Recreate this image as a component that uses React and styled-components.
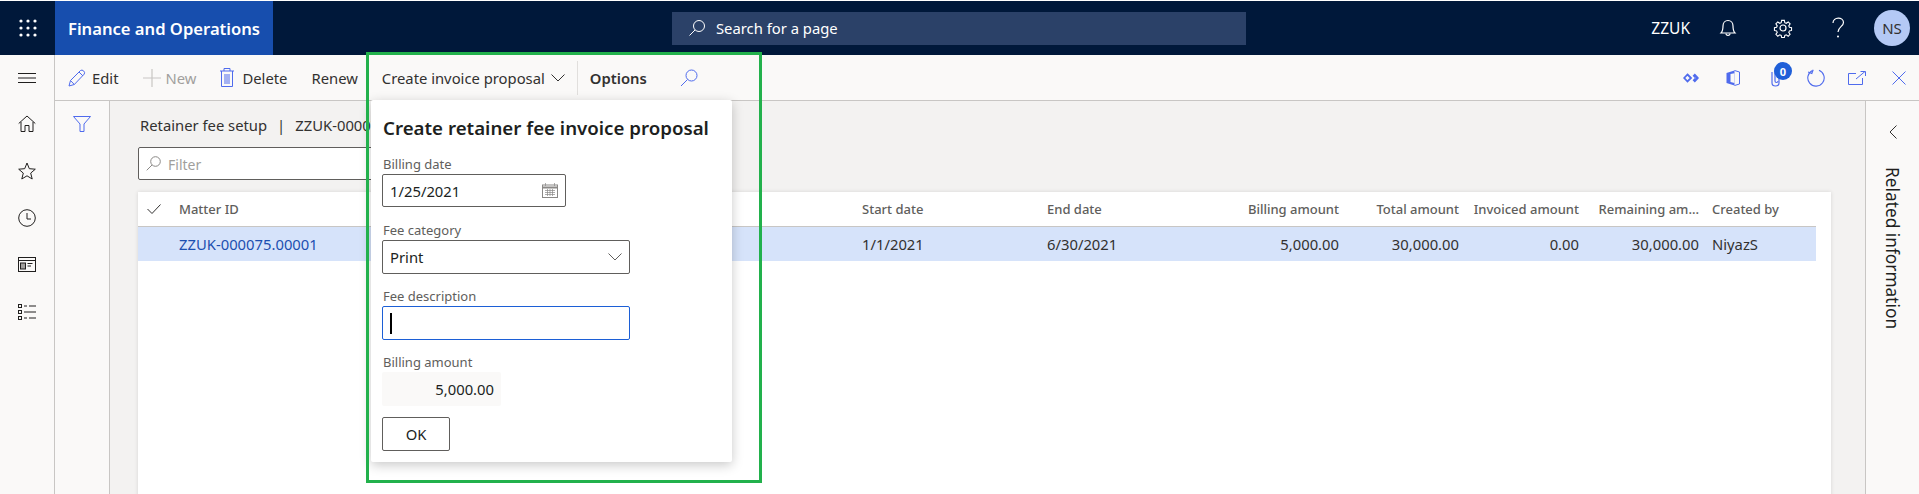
import React from "react";
import styled, { createGlobalStyle } from "styled-components";

const FONT = `"Noto Sans", "Open Sans", "Liberation Sans", sans-serif`;
const BLUE = "#4f6bed";

const GlobalStyle = createGlobalStyle`
  html, body {
    margin: 0;
    padding: 0;
    background: #ffffff;
  }
  * {
    box-sizing: border-box;
  }
`;

const Ico = ({ w = 20, h = 20, box, color = "currentColor", children, sw = 1 }) => (
  <svg
    width={w}
    height={h}
    viewBox={box || `0 0 ${w} ${h}`}
    fill="none"
    stroke={color}
    strokeWidth={sw}
  >
    {children}
  </svg>
);

const COLUMNS = [
  { key: "start", label: "Start date", value: "1/1/2021" },
  { key: "end", label: "End date", value: "6/30/2021" },
  { key: "billing", label: "Billing amount", value: "5,000.00", right: true },
  { key: "total", label: "Total amount", value: "30,000.00", right: true },
  { key: "invoiced", label: "Invoiced amount", value: "0.00", right: true },
  { key: "remaining", label: "Remaining am...", value: "30,000.00", right: true },
  { key: "created", label: "Created by", value: "NiyazS", pad: true },
];

export default function App() {
  return (
    <Page>
      <GlobalStyle />
      <TopBar>
        <Waffle>
          <Ico w={18} h={18}>
            {[2, 9, 16].map((y) =>
              [2, 9, 16].map((x) => (
                <circle key={`${x}-${y}`} cx={x} cy={y} r="1.6" fill="#fff" stroke="none" />
              ))
            )}
          </Ico>
        </Waffle>
        <Brand>Finance and Operations</Brand>
        <SearchBox>
          <Ico w={18} h={18} color="#fff">
            <circle cx="11" cy="7" r="5.5" />
            <path d="M7 11 L1.5 16.5" />
          </Ico>
          Search for a page
        </SearchBox>
        <TopRight>
          <Company>ZZUK</Company>
          <TopIcon>
            <Ico w={18} h={18} color="#fff" sw={1.2}>
              <path d="M2 14 C4 12 4 10 4 7 C4 4 6 1.5 9 1.5 C12 1.5 14 4 14 7 C14 10 14 12 16 14 Z" />
              <path d="M7 14.5 C7 17 11 17 11 14.5" />
            </Ico>
          </TopIcon>
          <TopIcon>
            <Ico w={20} h={20} color="#fff" sw={1.2}>
              <circle cx="10" cy="10" r="3" />
              <path d="M8.5 1.5h3l.5 2.6 1.6.7 2.2-1.5 2.1 2.1-1.5 2.2.7 1.6 2.4.5v3l-2.4.5-.7 1.6 1.5 2.2-2.1 2.1-2.2-1.5-1.6.7-.5 2.4h-3l-.5-2.4-1.6-.7-2.2 1.5-2.1-2.1 1.5-2.2-.7-1.6-2.4-.5v-3l2.4-.5.7-1.6-1.5-2.2 2.1-2.1 2.2 1.5 1.6-.7z" transform="translate(1 1) scale(.9)" />
            </Ico>
          </TopIcon>
          <TopIcon>
            <Ico w={14} h={22} color="#fff" sw={1.2}>
              <path d="M2 6 C2 -0.5 12.5 -0.5 12.5 5.5 C12.5 9.5 7 10 7 15" />
              <circle cx="7" cy="19.5" r="1" fill="#fff" stroke="none" />
            </Ico>
          </TopIcon>
          <Avatar>NS</Avatar>
        </TopRight>
      </TopBar>

      <Main>
        <LeftNav>
          <NavItem $h={45}>
            <Ico w={18} h={10} color="#201f1e">
              <path d="M0 .5h18M0 5h18M0 9.500h18" />
            </Ico>
          </NavItem>
          <NavItem $h={47}>
            <Ico w={18} h={18} color="#201f1e">
              <path d="M.7 8.500 L9 1 L17.300 8.500 M3 7 V16.500 H7 V10.500 H11 V16.500 H15 V7" />
            </Ico>
          </NavItem>
          <NavItem $h={47}>
            <Ico w={18} h={18} color="#201f1e">
              <path d="M9 1 L11.300 6.700 L17.300 7.200 L12.700 11.100 L14.200 17 L9 13.800 L3.800 17 L5.300 11.100 L.7 7.200 L6.700 6.700 Z" />
            </Ico>
          </NavItem>
          <NavItem $h={47}>
            <Ico w={18} h={18} color="#201f1e">
              <circle cx="9" cy="9" r="8.300" />
              <path d="M9 4 V10 H13" />
            </Ico>
          </NavItem>
          <NavItem $h={47}>
            <Ico w={18} h={15} color="#201f1e">
              <rect x=".5" y=".5" width="17" height="14" />
              <path d="M0 3.500h18" />
              <rect x="2.500" y="6" width="5" height="6" fill="#a19f9d" />
              <path d="M9.500 6.500h5M9.500 9h3.500" />
            </Ico>
          </NavItem>
          <NavItem $h={47}>
            <Ico w={18} h={16} color="#201f1e">
              <rect x=".5" y=".5" width="3" height="3" />
              <rect x=".5" y="6.500" width="3" height="3" />
              <rect x=".5" y="12.500" width="3" height="3" />
              <path d="M6 2h3M11 2h7M6 8h12M6 14h3M11 14h7" />
            </Ico>
          </NavItem>
        </LeftNav>

        <Workspace>
          <Toolbar>
            <ToolGroup>
              <ToolButton>
                <Ico w={18} h={18} color={BLUE}>
                  <path d="M1 17 L2.500 11.500 L12.500 1.500 Q14 .5 15.500 1.800 Q17.200 3.300 16.300 5 L6.300 15.500 Z M2.500 11.500 L6.300 15.500 M11 3 L15 7" />
                </Ico>
                Edit
              </ToolButton>
              <ToolButton $disabled $gap={5}>
                <Ico w={18} h={18} color="#c8c6c4" sw={1.2}>
                  <path d="M9 0 V18 M0 9 H18" />
                </Ico>
                New
              </ToolButton>
              <ToolButton $gap={8}>
                <Ico w={14} h={19} color={BLUE}>
                  <path d="M0 3 H14 M4 3 V.5 H10 V3 M1.500 3 V18.500 H12.500 V3" />
                  <path d="M5 6 V16 M7 6 V16 M9 6 V16" />
                </Ico>
                Delete
              </ToolButton>
              <ToolButton>Renew</ToolButton>
              <ToolButton $gap={6}>
                Create invoice proposal
                <Ico w={14} h={8} color="#323130">
                  <path d="M.5 .5 L7 7 L13.500 .5" />
                </Ico>
              </ToolButton>
              <Divider />
              <ToolButton $strong>Options</ToolButton>
              <SearchTool>
                <Ico w={18} h={18} color={BLUE}>
                  <circle cx="11.500" cy="6.500" r="5.500" />
                  <path d="M7.500 10.500 L1 17" />
                </Ico>
              </SearchTool>
            </ToolGroup>
            <ToolRight>
              <ActionIcon $w={16}>
                <Ico w={16} h={10} color={BLUE} sw={1.8}>
                  <path d="M4.500 1.500 L8 5 L4.500 8.500 L1.200 5 Z" />
                  <path d="M11.800 .5 L14 2.700 L11.800 5 L9.600 2.700 Z M11.800 5 L14 7.300 L11.800 9.500 L9.600 7.300 Z M14 2.800 L16 5 L14 7.200 L12 5 Z" fill={BLUE} stroke="none" />
                </Ico>
              </ActionIcon>
              <ActionIcon $w={14} $ml={27}>
                <Ico w={14} h={16} color={BLUE}>
                  <path d="M8.500 .5 L13.500 2 V14 L8.500 15.500" />
                  <path d="M.5 3 L8.500 .5 V15.500 L.5 13 Z" fill={BLUE} stroke="none" />
                  <path d="M4.500 4 L8.500 3.300 V13 L4.500 12 Z" fill="#faf9f8" stroke="none" />
                </Ico>
              </ActionIcon>
              <ActionIcon $w={11} $ml={31}>
                <Ico w={11} h={19} color={BLUE} sw={1.2}>
                  <path d="M1 4 V15 C1 19 8 19 8 15 V3" />
                  <path d="M4 3 V13 C4 15 7 15 7 13" />
                </Ico>
                <Badge>0</Badge>
              </ActionIcon>
              <ActionIcon $w={18} $ml={25}>
                <Ico w={18} h={18} color={BLUE} sw={1.1}>
                  <path d="M5.500 1.500 A8.200 8.200 0 1 0 12 1.300" />
                  <path d="M5 .5 V4.500 H1" transform="rotate(20 5 4)" />
                </Ico>
              </ActionIcon>
              <ActionIcon $w={18} $ml={23}>
                <Ico w={18} h={14} color={BLUE}>
                  <path d="M8 2.500 H.5 V13.500 H14.500 V7" />
                  <path d="M8 8 L17 .5 M12.500 .5 H17.500 V5" />
                </Ico>
              </ActionIcon>
              <ActionIcon $w={14} $ml={26}>
                <Ico w={14} h={14} color={BLUE}>
                  <path d="M.5 .5 L13.500 13.500 M13.500 .5 L.5 13.500" />
                </Ico>
              </ActionIcon>
            </ToolRight>
          </Toolbar>

          <Body>
            <FilterPane>
              <Ico w={18} h={16} color={BLUE}>
                <path d="M.5 .5 H17.500 L11 8 V15.500 H7 V8 Z" />
              </Ico>
            </FilterPane>
            <Content>
              <Breadcrumb>
                Retainer fee setup<Pipe>|</Pipe>ZZUK-000075.00001
              </Breadcrumb>
              <FilterInput>
                <Ico w={15} h={15} color="#8a8886">
                  <circle cx="9.500" cy="5.500" r="4.800" />
                  <path d="M6 9 L.7 14.300" />
                </Ico>
                <FilterText>Filter</FilterText>
              </FilterInput>
              <Card>
                <TableRow $header>
                  <CheckCell>
                    <Ico w={14} h={10} color="#323130">
                      <path d="M.5 5 L5 9.500 L13.500 .5" />
                    </Ico>
                  </CheckCell>
                  <Cell>Matter ID</Cell>
                  {COLUMNS.map((c) => (
                    <Cell key={c.key} $right={c.right} $pad={c.pad}>
                      {c.label}
                    </Cell>
                  ))}
                </TableRow>
                <TableRow $selected>
                  <CheckCell />
                  <LinkCell>ZZUK-000075.00001</LinkCell>
                  {COLUMNS.map((c) => (
                    <Cell key={c.key} $right={c.right} $pad={c.pad}>
                      {c.value}
                    </Cell>
                  ))}
                </TableRow>
              </Card>
            </Content>
            <RightPane>
              <Ico w={8} h={14} color="#323130">
                <path d="M7.500 .5 L1 7 L7.500 13.500" />
              </Ico>
              <VerticalLabel>Related information</VerticalLabel>
            </RightPane>
          </Body>
        </Workspace>
      </Main>

      <Dialog>
        <DialogTitle>Create retainer fee invoice proposal</DialogTitle>
        <Field $mt={15}>
          <FieldLabel>Billing date</FieldLabel>
          <InputBox $w={184} $h={33}>
            1/25/2021
            <Ico w={16} h={15} color="#8a8886">
              <rect x=".5" y="2" width="15" height="12.500" />
              <path d="M0 4.500h16" strokeWidth="2" />
              <path d="M3.500 0v3M12.500 0v3M3 7.500h10M3 9.500h10M3 11.500h10M5.500 6v7M8 6v7M10.500 6v7" strokeWidth=".7" />
            </Ico>
          </InputBox>
        </Field>
        <Field $mt={13}>
          <FieldLabel>Fee category</FieldLabel>
          <InputBox $w={248} $h={34}>
            Print
            <Ico w={14} h={8} color="#605e5c">
              <path d="M.5 .5 L7 7 L13.500 .5" />
            </Ico>
          </InputBox>
        </Field>
        <Field>
          <FieldLabel>Fee description</FieldLabel>
          <InputBox $w={248} $h={34} $focus>
            <Caret />
          </InputBox>
        </Field>
        <Field>
          <FieldLabel>Billing amount</FieldLabel>
          <ReadOnlyBox>5,000.00</ReadOnlyBox>
        </Field>
        <OkButton>OK</OkButton>
      </Dialog>
      <Highlight />
    </Page>
  );
}

const Page = styled.div`
  position: relative;
  width: 1919px;
  height: 494px;
  padding-top: 1px;
  overflow: hidden;
  display: flex;
  flex-direction: column;
  font-family: ${FONT};
  font-size: 14.8px;
  color: #323130;
`;

// top navy bar
const TopBar = styled.header`
  flex: none;
  height: 54px;
  display: flex;
  align-items: center;
  background: #00183a;
  color: #ffffff;
`;

const Waffle = styled.div`
  width: 55px;
  height: 100%;
  display: flex;
  align-items: center;
  justify-content: center;
`;

const Brand = styled.div`
  width: 218px;
  height: 100%;
  padding-left: 13px;
  display: flex;
  align-items: center;
  background: #174eae;
  font-size: 16.6px;
  font-weight: 600;
`;

const SearchBox = styled.div`
  width: 574px;
  height: 33px;
  margin-left: 399px;
  padding-left: 16px;
  display: flex;
  align-items: center;
  gap: 10px;
  background: #2b4168;
`;

const TopRight = styled.div`
  margin-left: auto;
  padding-right: 9px;
  display: flex;
  align-items: center;
`;

const Company = styled.span`
  margin-right: 10px;
  font-size: 15.5px;
`;

const TopIcon = styled.div`
  width: 55px;
  display: flex;
  justify-content: center;
`;

const Avatar = styled.div`
  width: 36px;
  height: 36px;
  margin-left: 9px;
  border-radius: 50%;
  display: flex;
  align-items: center;
  justify-content: center;
  background: #b4c9f5;
  color: #323130;
  font-size: 15px;
`;

const Main = styled.div`
  flex: 1;
  min-height: 0;
  display: flex;
`;

const LeftNav = styled.nav`
  flex: none;
  width: 55px;
  background: #faf9f8;
  border-right: 1px solid #c8c6c4;
`;

const NavItem = styled.div`
  height: ${(p) => p.$h}px;
  display: flex;
  align-items: center;
  justify-content: center;
`;

const Workspace = styled.div`
  flex: 1;
  min-width: 0;
  display: flex;
  flex-direction: column;
`;

const Toolbar = styled.div`
  flex: none;
  height: 46px;
  display: flex;
  align-items: center;
  justify-content: space-between;
  background: #faf9f8;
  border-bottom: 1px solid #c8c6c4;
`;

const ToolGroup = styled.div`
  height: 100%;
  display: flex;
  align-items: center;
`;

const ToolButton = styled.div`
  display: flex;
  align-items: center;
  gap: ${(p) => p.$gap || 6}px;
  padding: 0 12px;
  white-space: nowrap;
  color: ${(p) => (p.$disabled ? "#a19f9d" : "#323130")};
  font-weight: ${(p) => (p.$strong ? 600 : 400)};
  &:first-child {
    padding-left: 13px;
  }
`;

const Divider = styled.div`
  width: 1px;
  height: 34px;
  background: #e1dfdd;
`;

const SearchTool = styled.div`
  display: flex;
  margin-left: 21px;
`;

const ToolRight = styled.div`
  display: flex;
  align-items: center;
  padding-right: 13px;
`;

const ActionIcon = styled.div`
  position: relative;
  width: ${(p) => p.$w}px;
  margin-left: ${(p) => p.$ml || 0}px;
  display: flex;
  justify-content: center;
`;

const Badge = styled.span`
  position: absolute;
  top: -6px;
  left: 3px;
  width: 18px;
  height: 18px;
  border-radius: 50%;
  display: flex;
  align-items: center;
  justify-content: center;
  background: #1f5fd8;
  color: #ffffff;
  font-size: 11px;
  font-weight: 700;
`;

const Body = styled.div`
  flex: 1;
  min-height: 0;
  display: flex;
`;

const FilterPane = styled.div`
  flex: none;
  width: 55px;
  padding-top: 15px;
  display: flex;
  justify-content: center;
  background: #faf9f8;
  border-right: 1px solid #c8c6c4;
`;

const Content = styled.main`
  flex: 1;
  min-width: 0;
  padding: 14px 34px 0 28px;
  background: #f3f2f1;
`;

const Breadcrumb = styled.div`
  height: 20px;
  padding-left: 2px;
  display: flex;
  align-items: center;
  white-space: nowrap;
`;

const Pipe = styled.span`
  margin: 0 10px;
`;

const FilterInput = styled.div`
  width: 280px;
  height: 33px;
  margin-top: 12px;
  padding-left: 7px;
  display: flex;
  align-items: center;
  gap: 7px;
  background: #ffffff;
  border: 1px solid #605e5c;
  border-radius: 2px;
  color: #a19f9d;
  font-size: 14px;
`;

const FilterText = styled.span`
  margin-top: 2px;
`;

const Card = styled.section`
  height: 320px;
  margin-top: 12px;
  padding-right: 15px;
  background: #ffffff;
  box-shadow: 0 0 4px rgba(0, 0, 0, 0.12);
`;

const TableRow = styled.div`
  height: ${(p) => (p.$header ? 35 : 34)}px;
  display: grid;
  grid-template-columns: 41px 683px 185px 172px 120px 120px 120px 120px 117px;
  align-items: center;
  background: ${(p) => (p.$selected ? "#d6e3fa" : "transparent")};
  color: ${(p) => (p.$header ? "#605e5c" : "#323130")};
  border-bottom: ${(p) => (p.$header ? "1px solid #c8c6c4" : "none")};
  font-size: ${(p) => (p.$header ? 13 : 14.8)}px;
  font-weight: ${(p) => (p.$header ? 500 : 400)};
`;

const CheckCell = styled.div`
  padding-left: 9px;
  display: flex;
  align-items: center;
`;

const Cell = styled.div`
  text-align: ${(p) => (p.$right ? "right" : "left")};
  padding-left: ${(p) => (p.$pad ? 13 : 0)}px;
  white-space: nowrap;
`;

const LinkCell = styled(Cell)`
  color: #1c4fb0;
`;

const RightPane = styled.aside`
  flex: none;
  width: 54px;
  padding-top: 24px;
  display: flex;
  flex-direction: column;
  align-items: center;
  gap: 28px;
  background: #faf9f8;
  border-left: 1px solid #c8c6c4;
`;

const VerticalLabel = styled.div`
  writing-mode: vertical-rl;
  font-size: 17.3px;
  color: #201f1e;
  white-space: nowrap;
`;

// popup under "Create invoice proposal"
const Dialog = styled.div`
  position: absolute;
  left: 371px;
  top: 100px;
  width: 361px;
  height: 362px;
  padding: 15px 11px 0 11px;
  display: flex;
  flex-direction: column;
  background: #ffffff;
  border-radius: 2px;
  box-shadow: 0 3px 12px rgba(0, 0, 0, 0.22);
`;

const DialogTitle = styled.div`
  height: 24px;
  display: flex;
  align-items: center;
  padding-left: 1px;
  font-size: 18.7px;
  font-weight: 600;
  color: #201f1e;
  white-space: nowrap;
`;

const Field = styled.div`
  margin-top: ${(p) => p.$mt || 12}px;
  display: flex;
  flex-direction: column;
`;

const FieldLabel = styled.div`
  height: 20px;
  display: flex;
  align-items: center;
  padding-left: 1px;
  font-size: 13px;
  color: #605e5c;
`;

const InputBox = styled.div`
  width: ${(p) => p.$w}px;
  height: ${(p) => p.$h}px;
  padding: 0 7px;
  display: flex;
  align-items: center;
  justify-content: space-between;
  border: 1px solid ${(p) => (p.$focus ? "#1c5fd6" : "#605e5c")};
  border-radius: 2px;
  color: #201f1e;
`;

const Caret = styled.span`
  width: 2px;
  height: 21px;
  background: #000000;
`;

const ReadOnlyBox = styled.div`
  width: 119px;
  height: 34px;
  padding-right: 7px;
  display: flex;
  align-items: center;
  justify-content: flex-end;
  background: #faf9f8;
  color: #201f1e;
  border-radius: 2px;
`;

const OkButton = styled.div`
  width: 68px;
  height: 34px;
  margin-top: 11px;
  display: flex;
  align-items: center;
  justify-content: center;
  border: 1px solid #605e5c;
  border-radius: 2px;
  color: #201f1e;
`;

// green annotation frame drawn over the shot
const Highlight = styled.div`
  position: absolute;
  left: 366px;
  top: 52px;
  width: 396px;
  height: 431px;
  border: 3px solid #22b14c;
  pointer-events: none;
`;
